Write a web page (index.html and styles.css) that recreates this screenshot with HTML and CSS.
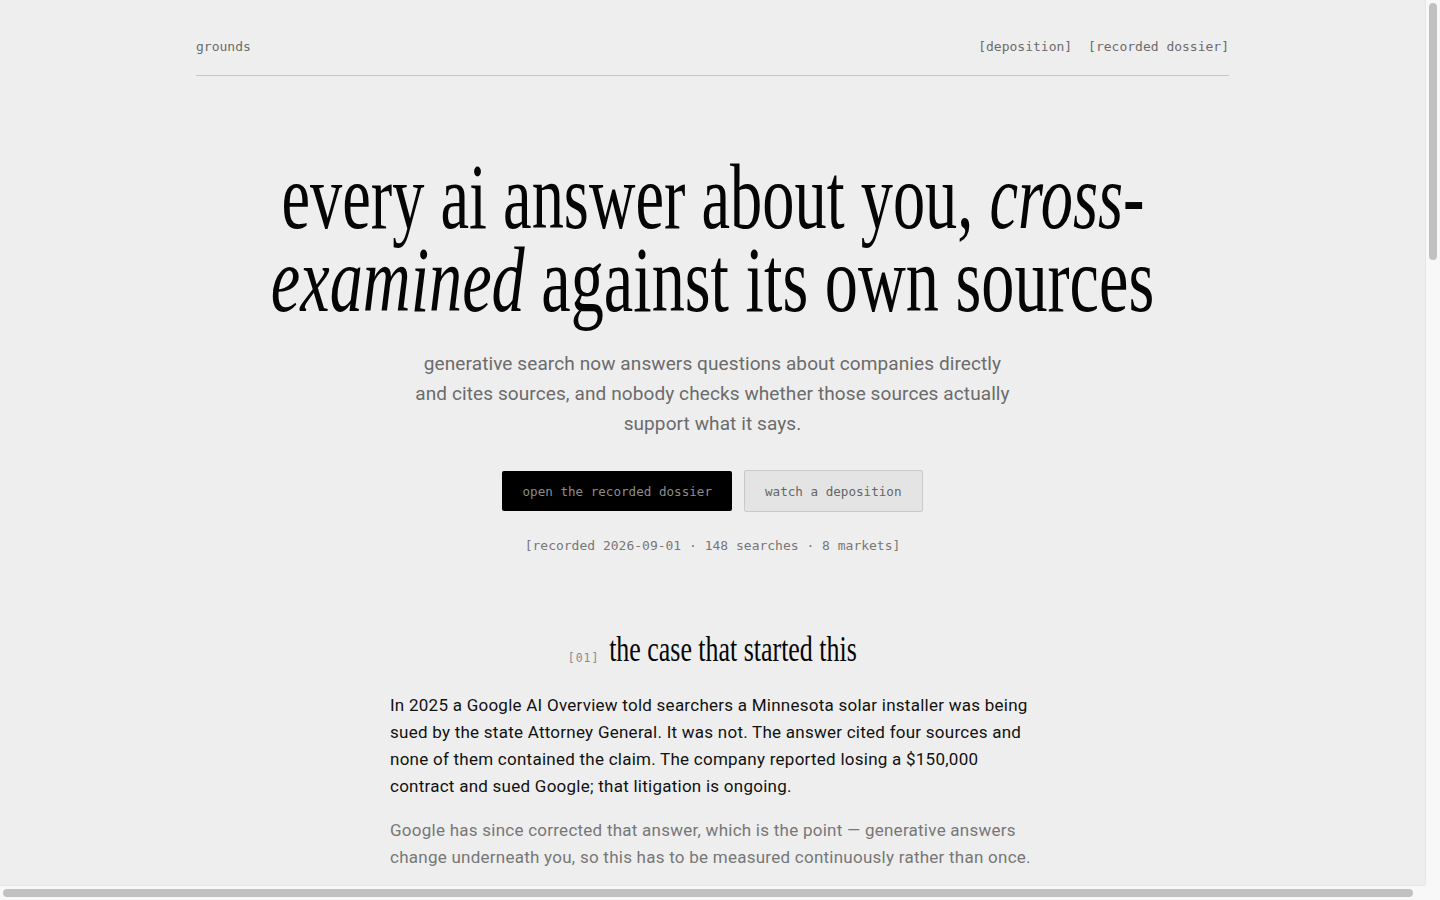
FILE: index.html
```html
<!DOCTYPE html>
<html lang="en">
<head>
<meta charset="utf-8">
<title>grounds</title>
<link rel="stylesheet" href="styles.css">
</head>
<body>
<header class="site-header">
  <div class="wrap header-row">
    <a class="brand" href="#">grounds</a>
    <nav class="nav">
      <a href="#">[deposition]</a>
      <a href="#">[recorded dossier]</a>
    </nav>
  </div>
</header>

<main>
  <section class="hero">
    <h1 class="headline">
      <span class="line">every ai answer about you, <em>cross-</em></span>
      <span class="line"><em>examined</em> against its own sources</span>
    </h1>
    <p class="lede">generative search now answers questions about companies directly and cites sources, and nobody checks whether those sources actually support what it says.</p>
    <div class="actions">
      <a class="btn btn-dark" href="#">open the recorded dossier</a>
      <a class="btn btn-light" href="#">watch a deposition</a>
    </div>
    <p class="meta">[recorded 2026-09-01 · 148 searches · 8 markets]</p>
  </section>

  <section class="chapter">
    <h2 class="chapter-title"><span class="num">[01]</span><span class="title-text">the case that started this</span></h2>
    <div class="prose">
      <p>In 2025 a Google AI Overview told searchers a Minnesota solar installer was being sued by the state Attorney General. It was not. The answer cited four sources and none of them contained the claim. The company reported losing a $150,000 contract and sued Google; that litigation is ongoing.</p>
      <p class="muted">Google has since corrected that answer, which is the point — generative answers change underneath you, so this has to be measured continuously rather than once.</p>
    </div>
  </section>

  <section class="chapter">
    <h2 class="chapter-title"><span class="num">[02]</span><span class="title-text">how a deposition works</span></h2>
    <div class="prose">
      <p>Every recorded search is replayed against the engines your customers use. Each claim in the answer is pulled apart and set next to the passage it cites, so you can see where the source supports it, where it is silent, and where it says the opposite.</p>
      <p class="muted">Nothing is summarised away: the full answer, the full sources and the verdict on each claim are kept in the dossier.</p>
    </div>
  </section>

  <section class="chapter">
    <h2 class="chapter-title"><span class="num">[03]</span><span class="title-text">what the dossier holds</span></h2>
    <div class="prose">
      <p>A dated record of what generative search said about you, in each market, with each citation checked. When an answer changes, the change is recorded too, so you have the history rather than a single snapshot.</p>
      <p class="muted">It is built to be handed to a lawyer, a communications team or the engine itself.</p>
    </div>
  </section>
</main>

<footer class="site-footer">
  <div class="wrap footer-row">
    <span>grounds</span>
    <span>[deposition] [recorded dossier]</span>
  </div>
</footer>

<div class="scrollbar scrollbar-v" aria-hidden="true"><div class="thumb thumb-v"></div></div>
<div class="scrollbar scrollbar-h" aria-hidden="true"><div class="thumb thumb-h"></div></div>
<div class="scrollbar-corner" aria-hidden="true"></div>
</body>
</html>
```

FILE: styles.css
```css
html, body {
  margin: 0;
  padding: 0;
}

body {
  background: #eeeeee;
  color: #111111;
  font-family: Roboto, "Liberation Sans", sans-serif;
  padding-right: 15px;
  padding-bottom: 15px;
}

a {
  color: inherit;
  text-decoration: none;
}

.wrap {
  max-width: 1033px;
  margin: 0 auto;
}

/* header */
.header-row {
  display: flex;
  justify-content: space-between;
  align-items: center;
  padding: 38px 0 20px;
  border-bottom: 1px solid #c6c6c6;
}

.brand,
.nav a {
  font-family: "DejaVu Sans Mono", "Liberation Mono", monospace;
  font-size: 13px;
  line-height: 17px;
  color: #6c6c6c;
}

.nav {
  display: flex;
  gap: 16px;
}

/* hero */
.hero {
  padding-top: 79px;
  text-align: center;
}

.headline {
  margin: 0;
  font-family: "Liberation Serif", "DejaVu Serif", serif;
  font-weight: 400;
  font-size: 94px;
  line-height: 83px;
  color: #050505;
  display: flex;
  flex-direction: column;
  align-items: center;
}

.headline .line {
  white-space: nowrap;
  transform: scaleX(0.685);
}

.headline .line + .line {
  transform: scaleX(0.705);
}

.headline em {
  font-style: italic;
}

.lede {
  max-width: 610px;
  margin: 28px auto 0;
  font-size: 19px;
  line-height: 30px;
  color: #6b6b6b;
  letter-spacing: 0.1px;
}

.actions {
  display: flex;
  justify-content: center;
  align-items: center;
  gap: 12px;
  margin-top: 31px;
}

.btn {
  display: inline-flex;
  align-items: center;
  height: 40px;
  padding: 0 20px;
  border-radius: 2px;
  font-family: "DejaVu Sans Mono", "Liberation Mono", monospace;
  font-size: 12.6px;
}

.btn-dark {
  background: #000000;
  color: #8c8c8c;
}

.btn-light {
  background: #e4e4e4;
  color: #666666;
  border: 1px solid #c9c9c9;
}

.meta {
  margin: 25px 0 0;
  font-family: "DejaVu Sans Mono", "Liberation Mono", monospace;
  font-size: 13px;
  line-height: 17px;
  color: #777777;
}

/* chapters */
.chapter {
  margin-top: 75px;
}

.chapter-title {
  margin: 0;
  display: flex;
  justify-content: center;
  align-items: baseline;
  gap: 10px;
  font-weight: 400;
}

.chapter-title .num {
  font-family: "DejaVu Sans Mono", "Liberation Mono", monospace;
  font-size: 11.5px;
  letter-spacing: 0.08em;
  color: #8a8a8a;
  position: relative;
  top: 1px;
}

.chapter-title .title-text {
  font-family: "Liberation Serif", "DejaVu Serif", serif;
  font-size: 36px;
  line-height: 40px;
  color: #050505;
  white-space: nowrap;
  transform: scaleX(0.72);
  margin: 0 -48px;
}

.prose {
  max-width: 645px;
  margin: 23px auto 0;
  font-size: 17px;
  line-height: 27px;
  letter-spacing: 0.25px;
}

.prose p {
  margin: 0 0 17px;
}

.prose .muted {
  color: #777777;
}

.site-footer {
  margin-top: 1000px;
}

.footer-row {
  display: flex;
  justify-content: space-between;
  padding: 24px 0 48px;
  border-top: 1px solid #c6c6c6;
  font-family: "DejaVu Sans Mono", "Liberation Mono", monospace;
  font-size: 13px;
  color: #6a6a6a;
}

/* window scrollbars, as shown in the capture */
.scrollbar {
  position: fixed;
  box-sizing: border-box;
  background: #f8f8f8;
  display: flex;
}

.scrollbar-v {
  top: 0;
  right: 0;
  width: 15px;
  height: calc(100% - 15px);
  border-left: 1px solid #e6e6e6;
  padding: 3px 3px 0 3px;
}

.scrollbar-h {
  left: 0;
  bottom: 0;
  height: 15px;
  width: calc(100% - 15px);
  border-top: 1px solid #e6e6e6;
  padding: 3px 0 0 3px;
}

.thumb {
  background: #c1c1c1;
  border-radius: 4px;
}

.thumb-v {
  width: 8px;
  height: 257px;
}

.thumb-h {
  width: 1410px;
  height: 8px;
}

.scrollbar-corner {
  position: fixed;
  right: 0;
  bottom: 0;
  width: 15px;
  height: 15px;
  background: #f8f8f8;
}
```
